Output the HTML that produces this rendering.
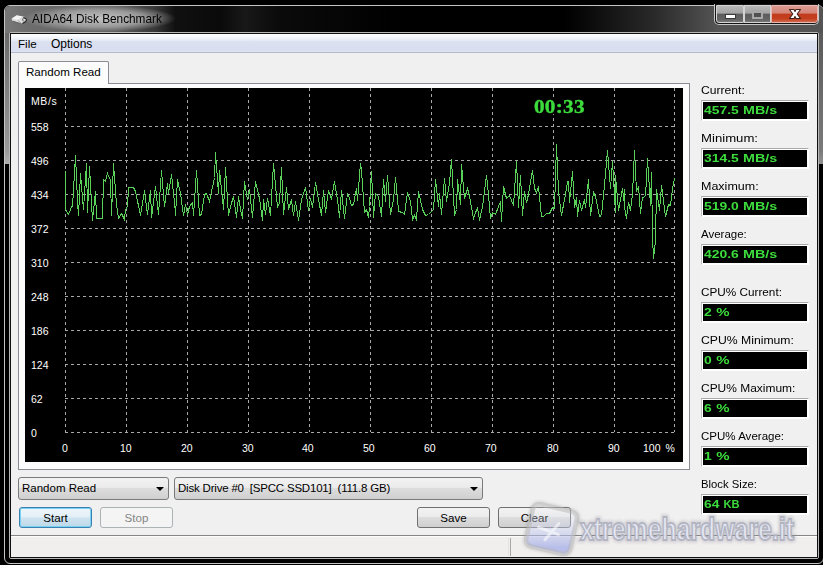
<!DOCTYPE html>
<html><head><meta charset="utf-8">
<style>
*{margin:0;padding:0;box-sizing:border-box}
html,body{width:823px;height:565px;overflow:hidden;background:#000}
body{position:relative;font-family:"Liberation Sans",sans-serif;font-size:11px;color:#000}
.a{position:absolute}
.t{position:absolute;white-space:nowrap;line-height:1}
.lbl{position:absolute;left:701px;transform-origin:0 0;font-size:11.6px;color:#000;white-space:nowrap;line-height:1}
.val{position:absolute;left:701px;width:108px;height:21px;border:1px solid;border-color:#a8a8a8 #fff #fff #c0c0c0;background:#fff;padding:1px}
.u{display:inline-block;font-style:normal;transform:scaleX(0.88);transform-origin:0 0}
.pc{display:inline-block;font-style:normal;transform:scaleX(1.08);transform-origin:0 0}
.val div{width:100%;height:100%;background:#000;position:relative}
.val span{position:absolute;left:1px;top:3px;font-family:"Liberation Sans",sans-serif;font-weight:bold;font-size:11.4px;letter-spacing:0px;color:#3cdc3c;line-height:1;white-space:nowrap;transform:scaleX(1.22);transform-origin:0 0}
.btn{position:absolute;top:507px;width:73px;height:21px;border:1px solid #707070;border-radius:3px;
 background:linear-gradient(#f2f2f2 0,#ebebeb 45%,#dddddd 50%,#cfcfcf 100%);
 text-align:center;font-size:11.6px;line-height:20px;color:#000}
.combo{position:absolute;top:477px;height:23px;border:1px solid #7a7a7a;border-radius:3px;
 background:linear-gradient(#f2f2f2 0,#ebebeb 45%,#dddddd 50%,#cfcfcf 100%);font-size:11.5px;line-height:21px;padding-left:3px;white-space:nowrap}
.arrow{position:absolute;top:9px;width:0;height:0;border-left:4px solid transparent;border-right:4px solid transparent;border-top:4.5px solid #000}
.yl{position:absolute;left:31px;font-size:10.5px;color:#fff;line-height:1}
.xl{position:absolute;top:443px;font-size:10.5px;color:#fff;line-height:1;white-space:nowrap}
</style></head><body>
<!-- window frame -->
<div class="a" style="left:4px;top:5px;width:820px;height:559px;border:1px solid #c4c4c4;border-radius:6px 6px 6px 6px;background:#000;overflow:hidden">
  <div class="a" style="left:0;top:0;width:820px;height:27px;background:linear-gradient(90deg,#787878 0,#6e6e6e 20px,#5e5e5e 110px,#383838 150px,#101010 170px,#0a0a0a 215px,#181818 240px,#0a0a0a 275px,#000 400px,#000 560px,#2a2a2a 650px,#545454 712px)"></div>
  <div class="a" style="left:0;top:27px;width:5px;height:131px;background:linear-gradient(#6a6a6a,#9a9a9a 90%,#b0b0b0)"></div>
  <div class="a" style="left:813px;top:27px;width:6px;height:131px;background:linear-gradient(#5a5a5a,#7a7a7a 90%,#909090)"></div>
</div>
<!-- title glow + text -->
<div class="a" style="left:23px;top:5px;width:153px;height:27px;border-radius:14px;background:radial-gradient(ellipse closest-side,rgba(200,200,200,.95) 0,rgba(170,170,170,.8) 60%,rgba(120,120,120,0) 100%)"></div>
<div class="t" style="left:32px;top:13px;font-size:11.8px;color:#000;transform:scaleY(1.1);transform-origin:0 0">AIDA64 Disk Benchmark</div>
<!-- icon -->
<svg class="a" style="left:0;top:0" width="40" height="32" viewBox="0 0 40 32">
 <path d="M11.5,18.8 L16.5,15.3 L24.5,16.8 L26.8,19.5 L21.5,23.6 L12.5,21 Z" fill="#dcdcdc"/>
 <path d="M11.8,18.5 L16.8,15.5 L22.5,16.6 L17.5,20 Z" fill="#f4f4f4"/>
 <path d="M17.5,20.2 L21.5,23.3" stroke="#9a9a9a" stroke-width=".8"/>
 <path d="M23.2,17.6 Q27.2,18.6 26.4,20.6 Q25.6,22.4 22.6,23.4" fill="none" stroke="#262626" stroke-width="1.1"/><path d="M22.6,18.6 Q22.4,20.2 23.6,21.4" fill="none" stroke="#4a4a4a" stroke-width=".9"/>
 <path d="M13,21.2 L20.8,23.8" stroke="#606060" stroke-width=".9"/>
</svg>
<!-- caption buttons -->
<div class="a" style="left:714px;top:4px;width:105px;height:21px;border:1px solid #c8c8c8;border-top:none;border-radius:0 0 5px 5px;background:#141414"></div>
<div class="a" style="left:716px;top:5px;width:28px;height:18px;border:1px solid #d4d4d4;border-radius:0 0 0 3px;background:linear-gradient(#b8b8b8 0,#a4a4a4 45%,#5c5c5c 50%,#646464 85%,#7a7a7a 100%)"></div>
<div class="a" style="left:725px;top:14px;width:11px;height:5px;background:#fff;border:1px solid #3a3a3a"></div>
<div class="a" style="left:744px;top:5px;width:27px;height:18px;border:1px solid #d4d4d4;background:linear-gradient(#b8b8b8 0,#a4a4a4 45%,#5c5c5c 50%,#646464 85%,#7a7a7a 100%)"></div>
<div class="a" style="left:752px;top:10px;width:11px;height:9px;border:2px solid #a8a8a8;border-top-width:3px;background:#505050"></div>
<div class="a" style="left:771px;top:5px;width:47px;height:18px;border:1px solid #e8b8b0;border-radius:0 0 3px 0;background:linear-gradient(#dc9a90 0,#d48478 45%,#c23a1c 50%,#c4401f 80%,#d06850 100%)"></div>
<svg class="a" style="left:786px;top:7px" width="16" height="14" viewBox="786 7 16 14">
 <path d="M789.5,9.5 L794,9.5 L795,11.5 L796,9.5 L800.5,9.5 L797.2,14 L800.5,18.5 L796,18.5 L795,16.5 L794,18.5 L789.5,18.5 L792.8,14 Z" fill="#fff" stroke="#402018" stroke-width="1.1" stroke-linejoin="round"/>
</svg>
<!-- inner frame lines -->
<div class="a" style="left:9px;top:32px;width:810px;height:527px;border:1px solid #b8b8b8;border-radius:2px"></div>
<div class="a" style="left:10px;top:33px;width:808px;height:525px;border:1px solid #101010;background:#f0f0f0"></div>
<!-- menu -->
<div class="a" style="left:11px;top:34px;width:806px;height:19px;background:linear-gradient(#fdfdfe 0,#f6f8fc 3px,#e8ecf6 6px,#dae0f0 8px,#d9dff0 16px,#dfe4f3 18px)"></div>
<div class="a" style="left:11px;top:52px;width:806px;height:1px;background:#b6bbcc"></div>
<div class="t" style="left:18px;top:38px;font-size:11.6px">File</div>
<div class="t" style="left:51px;top:38px;font-size:12px">Options</div>
<!-- tab -->
<div class="a" style="left:18px;top:83px;width:672px;height:387px;border:1px solid #898c95;background:#fcfcfc"></div>
<div class="a" style="left:18px;top:61px;width:91px;height:23px;border:1px solid #898c95;border-bottom:none;border-radius:2px 2px 0 0;background:#fcfcfc"></div>
<div class="t" style="left:26px;top:66px;font-size:11.6px">Random Read</div>
<!-- chart -->
<div class="a" style="left:25px;top:88px;width:658px;height:374px;background:#000"></div>
<svg id="chart" class="a" style="left:0;top:0" width="823" height="565" viewBox="0 0 823 565">
 <path d="M65.5,88 V432 M126.5,88 V432 M187.5,88 V432 M248.5,88 V432 M309.5,88 V432 M370.5,88 V432 M431.5,88 V432 M492.5,88 V432 M553.5,88 V432 M614.5,88 V432 M674.5,88 V432 " stroke="#a8a8a8" stroke-width="1" stroke-dasharray="3 3" fill="none"/><path d="M65,126.5 H675 M65,160.5 H675 M65,194.5 H675 M65,228.5 H675 M65,262.5 H675 M65,296.5 H675 M65,330.5 H675 M65,364.5 H675 M65,398.5 H675 M65,432.5 H675 " stroke="#a8a8a8" stroke-width="1" stroke-dasharray="3 3" fill="none"/>
 <polyline fill="none" stroke="#5ad25a" stroke-width="1" stroke-linejoin="miter" shape-rendering="crispEdges" points="65.5,170.5 65.5,209.5 68.5,214.5 72.5,204.5 72.5,206.5 75.5,155.5 77.5,201.5 78.5,215.5 80.5,173.5 83.5,209.5 86.5,163.5 87.5,212.5 89.5,166.5 92.5,220.5 95.5,191.5 96.5,218.5 102.5,218.5 103.5,179.5 105.5,181.5 107.5,173.5 110.5,180.5 111.5,215.5 113.5,163.5 116.5,204.5 118.5,218.5 118.5,218.5 121.5,213.5 124.5,219.5 125.5,209.5 127.5,206.5 128.5,187.5 133.5,187.5 135.5,191.5 140.5,215.5 144.5,190.5 147.5,214.5 150.5,190.5 151.5,217.5 155.5,186.5 158.5,214.5 161.5,170.5 164.5,206.5 167.5,183.5 168.5,193.5 171.5,174.5 175.5,212.5 175.5,215.5 177.5,179.5 180.5,193.5 183.5,215.5 185.5,204.5 187.5,214.5 189.5,206.5 192.5,202.5 193.5,215.5 196.5,170.5 199.5,215.5 201.5,214.5 204.5,194.5 206.5,193.5 209.5,201.5 214.5,177.5 215.5,152.5 218.5,193.5 219.5,170.5 222.5,198.5 223.5,209.5 225.5,167.5 228.5,215.5 230.5,206.5 233.5,196.5 236.5,217.5 238.5,196.5 240.5,209.5 242.5,218.5 244.5,181.5 246.5,193.5 247.5,199.5 249.5,189.5 252.5,217.5 255.5,181.5 259.5,198.5 262.5,220.5 263.5,199.5 265.5,214.5 267.5,198.5 270.5,215.5 273.5,163.5 277.5,207.5 279.5,202.5 281.5,167.5 283.5,214.5 286.5,187.5 288.5,209.5 291.5,199.5 293.5,215.5 295.5,201.5 298.5,220.5 301.5,199.5 305.5,187.5 308.5,210.5 310.5,198.5 312.5,207.5 315.5,182.5 318.5,199.5 321.5,215.5 323.5,190.5 325.5,212.5 328.5,190.5 331.5,199.5 334.5,181.5 337.5,199.5 339.5,217.5 341.5,190.5 344.5,218.5 344.5,218.5 347.5,193.5 349.5,198.5 351.5,205.5 353.5,204.5 356.5,188.5 357.5,200.5 360.5,163.5 361.5,170.5 364.5,212.5 366.5,209.5 368.5,217.5 369.5,206.5 371.5,171.5 373.5,217.5 375.5,193.5 378.5,196.5 381.5,216.5 383.5,179.5 385.5,201.5 387.5,175.5 390.5,214.5 393.5,199.5 395.5,177.5 398.5,210.5 398.5,211.5 402.5,212.5 404.5,214.5 407.5,192.5 410.5,201.5 412.5,219.5 414.5,215.5 416.5,219.5 418.5,191.5 422.5,209.5 425.5,215.5 428.5,214.5 433.5,209.5 435.5,179.5 438.5,206.5 439.5,193.5 441.5,214.5 444.5,178.5 446.5,201.5 449.5,182.5 451.5,159.5 454.5,215.5 456.5,209.5 457.5,179.5 460.5,204.5 461.5,164.5 464.5,198.5 467.5,188.5 469.5,196.5 473.5,218.5 477.5,207.5 479.5,220.5 482.5,206.5 486.5,175.5 488.5,194.5 490.5,218.5 492.5,212.5 495.5,214.5 500.5,201.5 501.5,221.5 503.5,186.5 506.5,198.5 509.5,195.5 513.5,205.5 516.5,161.5 518.5,207.5 520.5,175.5 522.5,215.5 524.5,191.5 526.5,202.5 528.5,194.5 532.5,170.5 534.5,188.5 536.5,192.5 538.5,186.5 541.5,216.5 543.5,216.5 546.5,213.5 549.5,213.5 552.5,207.5 554.5,208.5 556.5,144.5 558.5,191.5 561.5,215.5 565.5,194.5 567.5,181.5 568.5,181.5 569.5,202.5 572.5,171.5 574.5,207.5 576.5,197.5 577.5,216.5 579.5,200.5 581.5,210.5 584.5,199.5 585.5,207.5 588.5,179.5 590.5,215.5 593.5,192.5 595.5,196.5 599.5,216.5 601.5,215.5 604.5,185.5 607.5,150.5 610.5,188.5 612.5,161.5 615.5,212.5 615.5,175.5 618.5,210.5 622.5,188.5 624.5,205.5 624.5,207.5 624.5,188.5 624.5,207.5 626.5,218.5 628.5,202.5 630.5,210.5 632.5,194.5 634.5,150.5 636.5,191.5 638.5,186.5 640.5,213.5 642.5,197.5 645.5,196.5 647.5,158.5 650.5,205.5 651.5,172.5 652.5,236.5 653.5,258.5 655.5,240.5 656.5,189.5 659.5,210.5 661.5,185.5 665.5,216.5 668.5,204.5 670.5,205.5 672.5,188.5 674.5,178.5"/>
</svg>
<div class="a" style="left:532px;top:98px;width:54px;height:16px;background:#000"></div>
<div class="t" style="left:534px;top:98px;font-family:'Liberation Serif',serif;font-weight:bold;font-size:18px;letter-spacing:0.2px;color:#3cdc3c;-webkit-text-stroke:.35px #3cdc3c;transform:scaleX(1.18);transform-origin:0 0">00:33</div>
<div class="yl" style="top:96px;letter-spacing:.6px">MB/s</div>
<div class="yl" style="top:122px">558</div>
<div class="yl" style="top:156px">496</div>
<div class="yl" style="top:190px">434</div>
<div class="yl" style="top:224px">372</div>
<div class="yl" style="top:258px">310</div>
<div class="yl" style="top:292px">248</div>
<div class="yl" style="top:326px">186</div>
<div class="yl" style="top:360px">124</div>
<div class="yl" style="top:394px">62</div>
<div class="yl" style="top:428px">0</div>
<div class="xl" style="left:62px">0</div>
<div class="xl" style="left:120px">10</div>
<div class="xl" style="left:181px">20</div>
<div class="xl" style="left:242px">30</div>
<div class="xl" style="left:302px">40</div>
<div class="xl" style="left:363px">50</div>
<div class="xl" style="left:424px">60</div>
<div class="xl" style="left:485px">70</div>
<div class="xl" style="left:547px">80</div>
<div class="xl" style="left:608px">90</div>
<div class="xl" style="left:643px;word-spacing:2px">100 %</div>
<!-- right panel -->
<div class="lbl" style="top:84px;transform:scaleX(1.045)">Current:</div>
<div class="val" style="top:100px"><div><span>457.5 <i class="u" style="transform:scaleX(1.03)">MB/s</i></span></div></div>
<div class="lbl" style="top:132px;transform:scaleX(1.135)">Minimum:</div>
<div class="val" style="top:148px"><div><span>314.5 <i class="u" style="transform:scaleX(1.03)">MB/s</i></span></div></div>
<div class="lbl" style="top:180px;transform:scaleX(1.078)">Maximum:</div>
<div class="val" style="top:196px"><div><span>519.0 <i class="u" style="transform:scaleX(1.03)">MB/s</i></span></div></div>
<div class="lbl" style="top:228px;transform:scaleX(0.99)">Average:</div>
<div class="val" style="top:244px"><div><span>420.6 <i class="u" style="transform:scaleX(1.03)">MB/s</i></span></div></div>
<div class="lbl" style="top:286px;transform:scaleX(1.013)">CPU% Current:</div>
<div class="val" style="top:302px"><div><span>2 <i class="pc">%</i></span></div></div>
<div class="lbl" style="top:334px;transform:scaleX(1.053)">CPU% Minimum:</div>
<div class="val" style="top:350px"><div><span>0 <i class="pc">%</i></span></div></div>
<div class="lbl" style="top:382px;transform:scaleX(1.031)">CPU% Maximum:</div>
<div class="val" style="top:398px"><div><span>6 <i class="pc">%</i></span></div></div>
<div class="lbl" style="top:430px;transform:scaleX(0.994)">CPU% Average:</div>
<div class="val" style="top:446px"><div><span>1 <i class="pc">%</i></span></div></div>
<div class="lbl" style="top:478px;transform:scaleX(0.976)">Block Size:</div>
<div class="val" style="top:494px"><div><span>64 <i class="u" style="transform:scaleX(0.8)">KB</i></span></div></div>
<!-- bottom controls -->
<div class="combo" style="left:18px;width:151px">Random Read<div class="arrow" style="left:137px"></div></div>
<div class="combo" style="left:174px;width:309px;letter-spacing:-0.2px">Disk Drive #0&nbsp; [SPCC SSD101]&nbsp; (111.8 GB)<div class="arrow" style="left:295px"></div></div>
<div class="btn" style="left:19px;border-color:#3c7fb1;background:linear-gradient(#eef6fb 0,#e3eff6 48%,#cfe3ef 52%,#bdd8e8 100%);box-shadow:inset 0 0 0 1px #78d2f4">Start</div>
<div class="btn" style="left:100px;border-color:#adb2b5;background:#f4f4f4;color:#858585">Stop</div>
<div class="btn" style="left:417px">Save</div>
<div class="btn" style="left:498px">Clear</div>
<!-- status bar -->
<div class="a" style="left:11px;top:535px;width:806px;height:1px;background:#858585"></div>
<div class="a" style="left:11px;top:536px;width:806px;height:1px;background:#fcfcfc"></div>
<div class="a" style="left:11px;top:537px;width:806px;height:19px;background:#f1eeee"></div>
<div class="a" style="left:508px;top:538px;width:1px;height:18px;background:#e6e2e2"></div>
<div class="a" style="left:510px;top:538px;width:1px;height:18px;background:#a8a6a6"></div>
<!-- watermark -->
<svg class="a" style="left:0;top:0" width="823" height="565" viewBox="0 0 823 565">
 <defs>
  <linearGradient id="lg" x1="0" y1="0" x2="0.25" y2="1">
   <stop offset="0" stop-color="#ffffff" stop-opacity=".1"/><stop offset=".45" stop-color="#d4d8f0" stop-opacity=".35"/><stop offset="1" stop-color="#a4aee8" stop-opacity=".75"/>
  </linearGradient>
  <filter id="bl" x="-20%" y="-20%" width="140%" height="140%"><feGaussianBlur stdDeviation="1.3"/></filter>
 </defs>
 <g transform="translate(551.5 529) rotate(13)">
  <rect x="-24.5" y="-23.5" width="49" height="47" rx="8" fill="none" stroke="#808080" stroke-width="3" opacity=".22" filter="url(#bl)"/>
  <rect x="-22.5" y="-21.5" width="45" height="43" rx="6.5" fill="url(#lg)" stroke="#b8b8b8" stroke-opacity=".5" stroke-width="4.5"/>
  <path d="M-13,1 L8,4 M6,-7 L-4,12" stroke="#fff" stroke-opacity=".55" stroke-width="3" stroke-linecap="round"/>
 </g>
 <g transform="translate(0 540) scale(1 1.12) translate(0 -540)">
 <text x="580" y="540" font-family="Liberation Sans" font-size="28" font-weight="bold" textLength="214" lengthAdjust="spacingAndGlyphs" fill="none" stroke="#9090a0" stroke-width="5" opacity=".28" filter="url(#bl)">xtremehardware.it</text>
 <text x="580" y="540" font-family="Liberation Sans" font-size="28" font-weight="bold" textLength="214" lengthAdjust="spacingAndGlyphs" fill="#e6e9f6" fill-opacity=".92" stroke="#a8aab8" stroke-width="1.6" stroke-opacity=".8">xtremehardware.it</text>
 </g>
</svg>
</body></html>
